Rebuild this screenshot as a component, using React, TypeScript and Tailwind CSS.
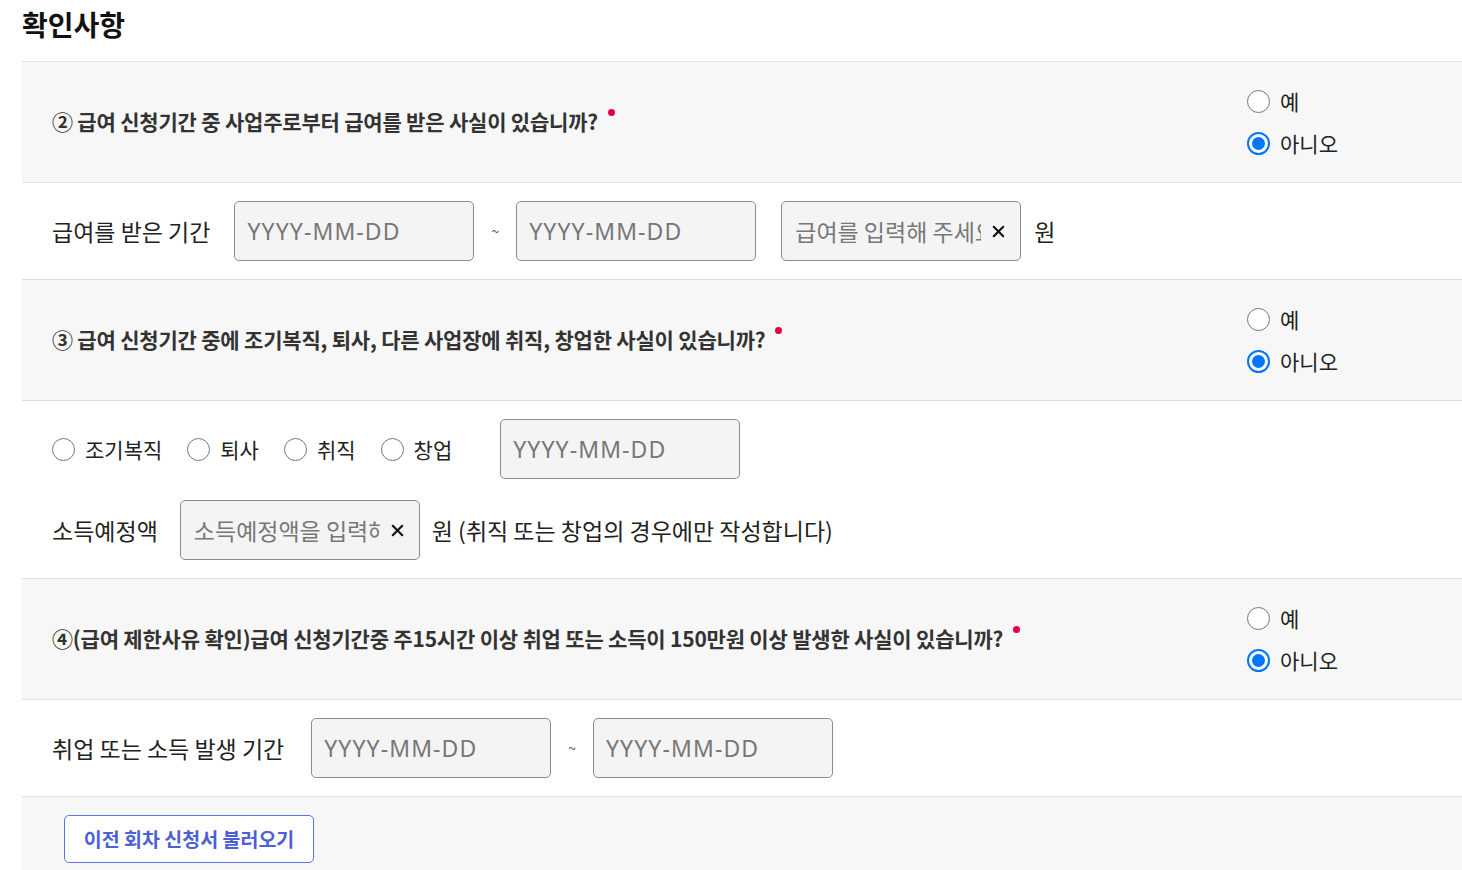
import { X } from 'lucide-react';
import { useState } from 'react';

function Radio({ checked, label, onClick }: { checked: boolean; label: string; onClick?: () => void }) {
  return (
    <button type="button" onClick={onClick} className="flex items-center gap-[10px] h-[30px]">
      {checked ? (
        <span className="w-[23px] h-[23px] rounded-full border-[2px] border-[#0075ff] bg-white flex items-center justify-center">
          <span className="w-[13px] h-[13px] rounded-full bg-[#0075ff]" />
        </span>
      ) : (
        <span className="w-[23px] h-[23px] rounded-full border-[1.5px] border-[#767676] bg-white" />
      )}
      <span className="text-[21px] text-[#222] leading-none">{label}</span>
    </button>
  );
}

function DateInput() {
  return (
    <input
      type="text"
      placeholder="YYYY-MM-DD"
      className="w-[240px] h-[60px] px-[12px] rounded-[5px] border border-[#8c8c8c] bg-[#f4f4f4] font-['Noto_Sans',sans-serif] text-[23px] tracking-[1.1px] text-[#333] placeholder:text-[#777] outline-none"
    />
  );
}

function ClearInput({ placeholder }: { placeholder: string }) {
  return (
    <div className="w-[240px] h-[60px] pl-[13px] pr-[12px] rounded-[5px] border border-[#8c8c8c] bg-[#f4f4f4] flex items-center">
      <input
        type="text"
        placeholder={placeholder}
        className="flex-1 min-w-0 bg-transparent text-[23px] text-[#333] placeholder:text-[#777] outline-none"
      />
      <X className="w-[19px] h-[19px] ml-[8px] text-[#111]" strokeWidth={2.6} />
    </div>
  );
}

function Question({ text, value, onChange }: { text: string; value: boolean; onChange: (v: boolean) => void }) {
  return (
    <div className="flex items-center bg-[#f7f7f7] border-b border-[#e0e0e0]">
      <div className="flex-1 pl-[30px] flex items-start">
        <span className="text-[21px] font-bold text-[#333] tracking-[-0.2px]">{text}</span>
        <span className="w-[7px] h-[7px] rounded-full bg-[#e4003f] ml-[10px] mt-[3px]" />
      </div>
      <div className="w-[215px] py-6 flex flex-col gap-3">
        <Radio checked={value} label="예" onClick={() => onChange(true)} />
        <Radio checked={!value} label="아니오" onClick={() => onChange(false)} />
      </div>
    </div>
  );
}

export default function App() {
  const [q2, setQ2] = useState(false);
  const [q3, setQ3] = useState(false);
  const [q4, setQ4] = useState(false);
  const [reason, setReason] = useState('');

  return (
    <div className="bg-white min-h-screen font-['Noto_Sans_CJK_KR','Noto_Sans',sans-serif] text-[#222]">
      <div className="ml-[22px]">
        <h2 className="text-[28px] font-bold text-[#111] leading-[40px] pt-[4px] pb-[17px]">확인사항</h2>

        <div className="border-t border-[#e0e0e0]">
          {/* 2 */}
          <Question text="② 급여 신청기간 중 사업주로부터 급여를 받은 사실이 있습니까?" value={q2} onChange={setQ2} />
          <div className="flex items-center py-[18px] pl-[30px] border-b border-[#e0e0e0]">
            <span className="text-[23px] mr-[24px]">급여를 받은 기간</span>
            <DateInput />
            <span className="text-[14px] text-[#555] mx-[17px]">~</span>
            <DateInput />
            <div className="ml-[25px]">
              <ClearInput placeholder="급여를 입력해 주세요" />
            </div>
            <span className="text-[23px] ml-[13px]">원</span>
          </div>

          {/* 3 */}
          <Question text="③ 급여 신청기간 중에 조기복직, 퇴사, 다른 사업장에 취직, 창업한 사실이 있습니까?" value={q3} onChange={setQ3} />
          <div className="flex flex-col gap-[21px] py-[18px] pl-[30px] border-b border-[#e0e0e0]">
            <div className="flex items-center h-[60px]">
              <div className="flex items-center gap-[25px]">
                {['조기복직', '퇴사', '취직', '창업'].map((r) => (
                  <Radio key={r} checked={reason === r} label={r} onClick={() => setReason(r)} />
                ))}
              </div>
              <div className="ml-[48px]">
                <DateInput />
              </div>
            </div>
            <div className="flex items-center h-[60px]">
              <span className="text-[23px] mr-[22px]">소득예정액</span>
              <ClearInput placeholder="소득예정액을 입력해 주세요" />
              <span className="text-[23px] ml-[12px]">원 (취직 또는 창업의 경우에만 작성합니다)</span>
            </div>
          </div>

          {/* 4 */}
          <Question text="④(급여 제한사유 확인)급여 신청기간중 주15시간 이상 취업 또는 소득이 150만원 이상 발생한 사실이 있습니까?" value={q4} onChange={setQ4} />
          <div className="flex items-center py-[18px] pl-[30px] border-b border-[#e0e0e0]">
            <span className="text-[23px] mr-[27px]">취업 또는 소득 발생 기간</span>
            <DateInput />
            <span className="text-[14px] text-[#555] mx-[17px]">~</span>
            <DateInput />
          </div>

          <div className="bg-[#f7f7f7] pt-[18px] pb-[30px] pl-[42px]">
            <button
              type="button"
              className="w-[250px] h-[48px] rounded-[5px] border border-[#5b74e8] bg-white text-[19.5px] font-bold text-[#4b5fd6]"
            >
              이전 회차 신청서 불러오기
            </button>
          </div>
        </div>
      </div>
    </div>
  );
}
